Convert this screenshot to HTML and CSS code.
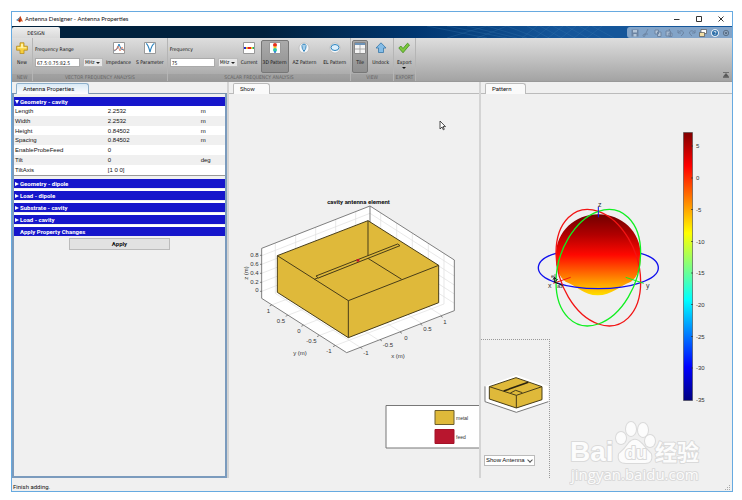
FILE: index.html
```html
<!DOCTYPE html>
<html lang="en">
<head>
<meta charset="utf-8">
<title>Antenna Designer - Antenna Properties</title>
<link rel="stylesheet" href="styles.css">
</head>
<body>
<div class="window">
  <header class="titlebar">
    <svg class="logo" viewBox="0 0 18 18"><path d="M0 10L5 7L8 10L4 13Z" fill="#4a8fb8"/><path d="M5 7Q8 5 11 0L8 10Z" fill="#2f5f8a"/><path d="M11 0Q14 5 18 15Q14 11 10 17Q7 12 4 13Q9 9 11 0Z" fill="#d9531e"/><path d="M11 0Q11 9 6 13Q9 12 10 17Q12 10 11 0Z" fill="#8c1d10"/></svg>
    <h1>Antenna Designer - Antenna Properties</h1>
    <div class="winbtns">
      <button aria-label="Minimize"><svg viewBox="0 0 6 6"><path d="M0 3.5H5.500" stroke="#333"/></svg></button>
      <button aria-label="Maximize"><svg viewBox="0 0 6 6"><path d="M.5.5h5v5h-5z" stroke="#333" fill="none"/></svg></button>
      <button aria-label="Close"><svg viewBox="0 0 6 6"><path d="M.5.5l5 5M5.500.5l-5 5" stroke="#333"/></svg></button>
    </div>
  </header>
  <nav class="banner">
    <button class="ribbon-tab">DESIGN</button>
    <svg class="lattice" viewBox="0 0 200 12" preserveAspectRatio="xMaxYMid slice"><path d="M0 0L60 12M20 0L80 12M40 0L90 12M60 0L100 12M80 0L110 12M100 0L122 12M113 0L135 12M126 0L148 12M139 0L161 12M152 0L174 12M165 0L187 12M60 0L20 12M80 0L50 12M110 0L95 12M123 0L108 12M136 0L121 12M149 0L134 12M162 0L147 12M175 0L160 12" stroke="#3a78ae" stroke-width=".5" opacity=".6"/></svg>
    <div class="quick">
      <button aria-label="Save"><svg viewBox="0 0 8 8"><path d="M.5.5h7v7h-7z" fill="#6c84a2"/><path d="M2 1h4v2.500H2zM2.500 5h3v2.500h-3z" fill="#b4c5d8"/></svg></button>
      <button aria-label="Cut"><svg viewBox="0 0 8 8"><path d="M6 0L3 6M2 5h4" stroke="#6c84a2" fill="none"/><circle cx="2" cy="6.500" r="1" fill="none" stroke="#6c84a2"/></svg></button>
      <button aria-label="Copy"><svg viewBox="0 0 8 8"><path d="M1 1h3.500v4H1zM3.500 3H7v4.500H3.500z" fill="#b4c5d8" stroke="#6c84a2"/></svg></button>
      <button aria-label="Paste"><svg viewBox="0 0 8 8"><path d="M1 2h4.500v5H1zM3 0h1.500v2M4 4h3v3.500H4z" fill="#a4b8cf" stroke="#6c84a2"/></svg></button>
      <button aria-label="Undo"><svg viewBox="0 0 8 8"><path d="M1 1v3h3M1 4Q4 0 6.500 3Q7 5 4 7" fill="none" stroke="#6c84a2"/></svg></button>
      <button aria-label="Redo"><svg viewBox="0 0 8 8"><path d="M7 1v3H4M7 4Q4 0 1.500 3Q1 5 4 7" fill="none" stroke="#6c84a2"/></svg></button>
      <button aria-label="Switch window"><svg viewBox="0 0 8 8"><path d="M2 .5h5.500v4H2z" fill="#fff" stroke="#555" stroke-width=".7"/><path d="M.5 3.500h5v4h-5z" fill="#f3dfa6" stroke="#555" stroke-width=".7"/></svg></button>
      <button aria-label="Help"><svg viewBox="0 0 8 8"><circle cx="4" cy="4" r="3.800" fill="#fff"/><circle cx="4" cy="4" r="3" fill="#2c6ea8"/><path d="M3 3.200Q3 2.200 4 2.200T5 3.200Q5 3.800 4 4.300M4 5.200v.8" fill="none" stroke="#fff" stroke-width=".8"/></svg></button>
      <button aria-label="More"><svg viewBox="0 0 8 8"><circle cx="4" cy="4" r="2.700" fill="#8fa6bf" stroke="#51647a" stroke-width=".8"/><path d="M2.600 3.500h2.800L4 5.200z" fill="#33475e"/></svg></button>
    </div>
  </nav>
  <section class="toolstrip">
    <div class="group">
      <div class="tools"><button class="tool roomy"><svg viewBox="0 0 12 12"><path d="M4 .8h4v3.400h3.400v4H8v3.400H4V8.200H.6v-4H4z" fill="#f7cf3c" stroke="#b68a1c" stroke-width=".8"/><path d="M5 1.800h2v3.400H10.500v1H1.500v-1H5z" fill="#fff3a8"/></svg>New</button></div>
      <div class="caption">NEW</div>
    </div>
    <div class="group">
      <div class="tools">
        <div class="field"><label for="range">Frequency Range</label><div class="pair"><input id="range" value="67.5:0.75:82.5"><span class="combo"><select aria-label="Range unit"><option>MHz</option></select></span></div></div>
        <button class="tool"><svg viewBox="0 0 12 12"><path d="M.5.5h11v11H.5z" fill="#fff" stroke="#999"/><path d="M1 9L4 7L6 2L8 7L11 8" fill="none" stroke="#2d83bd"/><path d="M1 8L3 8L5 4L7 9L9 5L11 9" fill="none" stroke="#e0785a" stroke-width=".8"/></svg>Impedance</button>
        <button class="tool"><svg viewBox="0 0 12 12"><path d="M.5.5h11v11H.5z" fill="#fff" stroke="#999"/><path d="M2 1.500Q4 2 6 10Q8 2 10.500 1.500" fill="none" stroke="#2d83bd" stroke-width="1.200"/></svg>S Parameter</button>
      </div>
      <div class="caption">VECTOR FREQUENCY ANALYSIS</div>
    </div>
    <div class="group">
      <div class="tools">
        <div class="field"><label for="freq">Frequency</label><div class="pair"><input id="freq" value="75"><span class="combo"><select aria-label="Frequency unit"><option>MHz</option></select></span></div></div>
        <button class="tool"><svg viewBox="0 0 12 12"><path d="M.5.5h11v11H.5z" fill="#fff" stroke="#999"/><path d="M1 6h2" stroke="#22c" stroke-width="2"/><path d="M3 6h1.500M8 6h1.500" stroke="#f2d21c" stroke-width="2"/><path d="M4.500 6H8" stroke="#e8201c" stroke-width="2"/><path d="M9.500 6H11" stroke="#2a6" stroke-width="2"/></svg>Current</button>
        <button class="tool pressed"><svg viewBox="0 0 12 12"><path d="M.5.5h11v11H.5z" fill="#fff" stroke="#999"/><circle cx="6" cy="3" r="2" fill="#e8301c"/><path d="M4.500 4.500h3v2h-3z" fill="#f5cf22"/><circle cx="6" cy="8" r="2" fill="#31c8a8"/><path d="M5 9.200h2v1.500H5z" fill="#2773d8"/></svg>3D Pattern</button>
        <button class="tool roomy"><svg viewBox="0 0 12 12"><circle cx="6" cy="6" r="5" fill="#f5f7f9" stroke="#b5b5b5" stroke-width=".7"/><path d="M6 9.500Q3.500 6 4 3.500Q4.500 2 6 2.200Q7.500 2 8 3.500Q8.500 6 6 9.500Z" fill="#dceefb" stroke="#2d83bd"/><path d="M6 3v4" stroke="#2d83bd" stroke-width=".6"/></svg>AZ Pattern</button>
        <button class="tool roomy"><svg viewBox="0 0 12 12"><circle cx="6" cy="6" r="5" fill="#f5f7f9" stroke="#b5b5b5" stroke-width=".7"/><ellipse cx="6" cy="5.500" rx="4" ry="3" fill="#dceefb" stroke="#2d83bd"/></svg>EL Pattern</button>
      </div>
      <div class="caption">SCALAR FREQUENCY ANALYSIS</div>
    </div>
    <div class="group">
      <div class="tools">
        <button class="tool pressed"><svg viewBox="0 0 12 12"><path d="M.5.5h11v11H.5z" fill="#f4f4f4" stroke="#888"/><path d="M1 1h10v2H1z" fill="#6d93b8"/><path d="M6 3v8M1 7h10" stroke="#999" stroke-width=".8"/></svg>Tile</button>
        <button class="tool roomy"><svg viewBox="0 0 12 12"><path d="M6 .8L11 6H8.500v4.500h-5V6H1z" fill="#84bce6" stroke="#3777a8" stroke-width=".8"/></svg>Undock</button>
      </div>
      <div class="caption">VIEW</div>
    </div>
    <div class="group">
      <div class="tools"><button class="tool"><svg viewBox="0 0 12 12"><path d="M.8 6L2.800 4L5 6.500L9.500 1.200L11.500 3L5 10.800Z" fill="#7cc93c" stroke="#3f8a1d" stroke-width=".8"/></svg>Export<i class="caret"></i></button></div>
      <div class="caption">EXPORT</div>
    </div>
    <button class="collapse" aria-label="Minimize toolstrip"><svg viewBox="0 0 6 6"><path d="M0 .5h6M3 1.500L5.500 4.500h-5zM0 5.500h6" fill="#555" stroke="#555" stroke-width=".7"/></svg></button>
  </section>
  <main class="panes">
    <section class="pane active">
      <div class="tabs"><button class="tab">Antenna Properties</button></div>
      <div class="content properties">
        <button class="bar"><i class="down"></i>Geometry - cavity</button>
        <table>
          <tr><td>Length</td><td>2.2532</td><td>m</td></tr>
          <tr><td>Width</td><td>2.2532</td><td>m</td></tr>
          <tr><td>Height</td><td>0.84502</td><td>m</td></tr>
          <tr><td>Spacing</td><td>0.84502</td><td>m</td></tr>
          <tr><td>EnableProbeFeed</td><td>0</td><td></td></tr>
          <tr><td>Tilt</td><td>0</td><td>deg</td></tr>
          <tr><td>TiltAxis</td><td>[1 0 0]</td><td></td></tr>
        </table>
        <button class="bar folded"><i class="right"></i>Geometry - dipole</button>
        <button class="bar folded"><i class="right"></i>Load - dipole</button>
        <button class="bar folded"><i class="right"></i>Substrate - cavity</button>
        <button class="bar folded"><i class="right"></i>Load - cavity</button>
        <h2 class="bar last">Apply Property Changes</h2>
        <button class="apply">Apply</button>
      </div>
    </section>
    <section class="pane">
      <div class="tabs"><button class="tab">Show</button></div>
      <div class="content">
        <svg class="figure" viewBox="229 94 250 384" preserveAspectRatio="xMidYMin meet">
          <g transform="translate(235 190) scale(.33333)" stroke-linejoin="round">
            <path d="M80 175L405 48L658 210V362L335 488L80 325Z" fill="#fff"/>
            <path d="M121 159V310L376 472M182 135V290L430 450M242 112V265L495 425M302 88V240L560 400M362 65V215L620 376M437 69V220L110 345M485 99V250L158 376M532 130V280L205 406M580 160V310L252 437M627 190V342L300 467M80 304L405 178L658 340M80 277L405 150L658 312M80 250L405 123L658 285M80 223L405 96L658 258M80 197L405 70L658 232" fill="none" stroke="#dedede" stroke-width="2"/>
            <path d="M80 175L405 48L658 210V362L335 488L80 325ZM405 48V150" fill="none" stroke="#666" stroke-width="2.500"/>
            <path d="M127 197L399 92L611 226V338L340 443L127 307Z" fill="#dfb93a" stroke="#473c18" stroke-width="3"/>
            <path d="M127 197L340 332L611 226M340 332V443M399 92V205L500 268M399 202L238 268" fill="none" stroke="#473c18" stroke-width="3"/>
            <path d="M243 258L488 162L495 167L250 264Z" fill="#dfb93a" stroke="#473c18" stroke-width="3"/>
            <path d="M365 207h8v8h-8z" fill="#c4122b"/>
            <path d="M80 196h-5M80 223h-5M80 250h-5M80 277h-5M80 304h-5M110 345l-6 3M158 376l-6 3M205 406l-6 3M252 437l-6 3M300 467l-6 3M376 472l6 4M435 449l6 4M495 426l6 4M556 402l6 4M617 378l6 4" stroke="#555" stroke-width="2"/>
          </g>
          <text class="title" x="358.500" y="204">cavity antenna element</text>
          <g class="tick end"><text x="258.500" y="257">0.8</text><text x="258.500" y="266">0.6</text><text x="258.500" y="275">0.4</text><text x="258.500" y="284">0.2</text><text x="258.500" y="292">0</text></g>
          <g class="tick mid">
            <text x="268.500" y="313">1</text><text x="281" y="323">0.5</text><text x="299" y="333">0</text><text x="311.500" y="343">-0.5</text><text x="329" y="353">-1</text>
            <text x="366" y="355">-1</text><text x="388" y="347">-0.5</text><text x="406" y="340">0</text><text x="427.500" y="331">0.5</text><text x="445" y="324">1</text>
            <text x="300" y="355">y (m)</text><text x="398" y="358">x (m)</text><text transform="translate(248 273) rotate(-90)">z (m)</text>
          </g>
          <path d="M481 405.500H386V448H481" fill="#fff" stroke="#777"/>
          <path d="M435 410.500h19v14h-19z" fill="#dfb93a" stroke="#6b5c2c"/>
          <path d="M435 429.500h19v14h-19z" fill="#b8162e" stroke="#a31228"/>
          <g class="legend"><text x="456" y="420">metal</text><text x="456" y="439">feed</text></g>
          <path d="M440 121v8l2-2 1.300 2.800 1-.5-1.300-2.700h2.500z" fill="#fff" stroke="#222" stroke-width=".8"/>
        </svg>
      </div>
    </section>
    <section class="pane">
      <div class="tabs"><button class="tab">Pattern</button></div>
      <div class="content">
        <svg class="figure" viewBox="481 94 251 384" preserveAspectRatio="xMidYMin meet">
          <defs>
            <linearGradient id="ball" x1="0" y1="0" x2="0" y2="1"><stop offset="0" stop-color="#700000"/><stop offset=".25" stop-color="#b00000"/><stop offset=".5" stop-color="#ff0800"/><stop offset=".75" stop-color="#ff7400"/><stop offset="1" stop-color="#ffe000"/></linearGradient>
            <linearGradient id="jet" x1="0" y1="0" x2="0" y2="1"><stop offset="0" stop-color="#800000"/><stop offset=".125" stop-color="#f00"/><stop offset=".375" stop-color="#ff0"/><stop offset=".625" stop-color="#0ff"/><stop offset=".875" stop-color="#00f"/><stop offset="1" stop-color="#000080"/></linearGradient>
          </defs>
          <g transform="translate(525 190) scale(.33333)" fill="none" stroke-width="4">
            <path d="M93 195C93 125 150 73 220 73S347 125 347 195C347 235 338 262 318 275C285 286 260 316 218 316S155 286 122 275C102 262 93 235 93 195Z" fill="url(#ball)"/>
            <path d="M93 190C58 200 40 215 40 234C40 268 120 296 220 296S400 268 400 234C400 215 382 200 347 190" stroke="#1010ee"/>
            <g transform="matrix(127 44 0 169 220 233)"><circle r="1" stroke="#f21414" stroke-width="1.300" vector-effect="non-scaling-stroke"/></g>
            <g transform="matrix(127 -44 0 169 220 233)"><circle r="1" stroke="#10ef20" stroke-width="1.300" vector-effect="non-scaling-stroke"/></g>
            <path d="M220 50V82" stroke="#1010ee" stroke-width="3"/>
            <path d="M85 280L137 262" stroke="#f21414" stroke-width="3"/><path d="M302 262L356 280" stroke="#10ef20" stroke-width="3"/>
            <path d="M88 262V276L112 286M84 269l5-7 5 7M88 276l10-8" stroke="#111" stroke-width="3"/>
          </g>
          <g class="axis"><text x="598" y="207">z</text><text x="548" y="288">x</text><text x="646" y="288">y</text><text class="small" x="551" y="278">el</text><text class="small" x="557" y="288">az</text></g>
          <path d="M683.500 132.500h9v268h-9z" fill="url(#jet)" stroke="#444" stroke-width=".6"/>
          <path d="M691 146h2M691 178h2M691 209.500h2M691 241.500h2M691 273h2M691 304.500h2M691 336.500h2M691 368h2" stroke="#333" stroke-width=".7"/>
          <g class="tick"><text x="696" y="148">5</text><text x="696" y="180">0</text><text x="696" y="212">-5</text><text x="696" y="244">-10</text><text x="696" y="275">-15</text><text x="696" y="307">-20</text><text x="696" y="339">-25</text><text x="696" y="370">-30</text><text x="696" y="402">-35</text></g>
        </svg>
        <aside class="preview">
          <svg viewBox="0 0 66 44"><g transform="scale(.33333)"><path d="M6 46L100 12L196 46V92L100 124L6 92Z" fill="#fff"/><path d="M6 46V92L100 124L196 92" fill="none" stroke="#777" stroke-width="3"/><path d="M19 47L99 20L177 47V86L100 111L19 84Z" fill="#dfb93a" stroke="#473c18" stroke-width="3"/><path d="M19 47L100 73L177 47M100 73V111M82 66L98 58L118 65" fill="none" stroke="#473c18" stroke-width="3"/><path d="M62 60L136 34" stroke="#2c2410" stroke-width="5"/></g></svg>
          <span class="combo wide"><select aria-label="Preview"><option>Show Antenna</option></select></span>
        </aside>
      </div>
    </section>
  </main>
  <footer class="status">Finish adding.<svg viewBox="0 0 6 6"><path d="M4 0h1v1H4zM2 2h1v1H2zM4 2h1v1H4zM0 4h1v1H0zM2 4h1v1H2zM4 4h1v1H4z" fill="#aaa"/></svg></footer>
  <svg class="watermark" viewBox="0 0 140 68">
    <g fill="#fcfcfc" stroke="#dadada" stroke-width="2" paint-order="stroke" stroke-linejoin="round">
      <text class="brand" x="1" y="41">Bai</text>
      <ellipse cx="52" cy="18" rx="5" ry="6"/><ellipse cx="62" cy="9" rx="5" ry="7"/><ellipse cx="74" cy="10" rx="5" ry="7"/><ellipse cx="81" cy="21" rx="5" ry="6"/>
      <path d="M50 34Q56 29 60 23Q66 16 73 24Q78 30 82 34Q84 43 76 43H57Q48 43 50 34Z"/>
      <text class="paw" x="56" y="39">du</text>
      <text class="cjk" x="86" y="40">经验</text>
      <text class="site" x="2" y="60">jingyan.baidu.com</text>
    </g>
  </svg>
</div>
</body>
</html>
```
FILE: styles.css
```css
* { box-sizing: border-box; }
body {
  margin: 0;
  padding: 11px 9px 8px 11px;
  min-height: 100vh;
  display: flex;
  background: #fff;
  color: #111;
  font: 5px/8px "DejaVu Sans Condensed", "Liberation Sans", sans-serif;
}
button, input, select { font: inherit; color: inherit; margin: 0; padding: 0; border: 0; background: none; }
svg { display: block; flex: none; }
.window { position: relative; flex: 1; display: flex; flex-direction: column; border: 1px solid #67aae0; background: #f0f0f0; }

.titlebar { display: flex; align-items: center; height: 14px; padding: 0 8px 0 4px; background: #fff; }
.logo { width: 7px; height: 7px; }
h1 { margin: 0 0 0 2px; font: 6px/8px "Lato", sans-serif; }
.winbtns { margin-left: auto; display: flex; gap: 16px; }
.winbtns svg { width: 6px; height: 6px; }

.banner { display: flex; align-items: flex-end; height: 12px; background: linear-gradient(90deg, #00213d 35%, #003670 56%, #15569a 76%); }
.ribbon-tab { width: 48px; height: 11px; border-radius: 2px 2px 0 0; background: linear-gradient(#eee, #d9d9d9); }
.lattice { width: 200px; height: 12px; margin-left: auto; }
.quick { display: flex; align-items: center; justify-content: space-between; width: 105px; height: 11px; padding: 0 2px 0 4px; border-radius: 3px 0 0 3px; background: #83a4c8; }
.quick svg { width: 8px; height: 8px; }

.toolstrip { position: relative; display: flex; height: 44px; background: linear-gradient(#dedede, #a3a3a3); border-bottom: 1px solid #999; }
.group { display: flex; flex-direction: column; border-right: 1px solid #b5b5b5; }
.tools { flex: 1; display: flex; gap: 1px; padding: 2px 1px 1px; }
.caption { height: 7px; line-height: 7px; text-align: center; color: #666; background: rgba(0, 0, 0, .06); }
.tool { display: flex; flex-direction: column; align-items: center; gap: 4px; padding: 1px 1px 0; border: 1px solid transparent; border-radius: 2px; white-space: nowrap; }
.roomy { padding: 1px 2px 0; }
.tool svg { width: 12px; height: 12px; }
.pressed { border-color: #777; background: linear-gradient(#aaa, #909090); }
.caret { border: 2px solid transparent; border-top-color: #111; border-bottom: 0; margin-top: -3px; }
.field { display: flex; flex-direction: column; padding: 5px 0 0 1px; }
.pair { display: flex; gap: 3px; margin-top: 5px; }
.pair input { width: 45px; height: 9px; padding: 0 1px; background: #fff; border: 1px solid #aaa; }
.combo { position: relative; display: flex; width: 20px; height: 9px; border: 1px solid #bbb; background: #e8e8e8; }
.combo select { appearance: none; flex: 1; padding-left: 1px; line-height: 7px; }
.combo::after { content: ""; position: absolute; right: 2px; top: 3px; border: 2px solid transparent; border-top-color: #222; border-bottom: 0; pointer-events: none; }
.collapse { position: absolute; right: 3px; bottom: 3px; }
.collapse svg { width: 6px; height: 6px; }

.panes { flex: 1; display: grid; grid-template-columns: 217fr 252fr 251fr; }
.pane { display: flex; flex-direction: column; border-right: 2px solid #d4d4d4; }
.pane:last-child { border-right: 0; }
.tabs { display: flex; height: 12px; padding: 1px 4px 0; border-bottom: 1px solid #bbb; }
.tab { height: 11px; padding: 0 14px 0 6px; border: 1px solid #bbb; border-bottom: 0; border-radius: 2px 3px 0 0; background: #fafafa; font: 6px/8px "Roboto", sans-serif; }
.active .tab { background: linear-gradient(#d9e9f5, #fff); border-color: #8fb0cb; }
.active .tabs { border-color: #7c93ad; }
.content { position: relative; flex: 1; display: flex; flex-direction: column; }
.figure { width: 100%; height: auto; }

.properties { border: 2px solid #7b9bbd; border-top: 0; padding: 3px 0 0; background: #f0f0f0; }
.bar { display: flex; align-items: center; height: 9px; margin: 0; padding-left: 1px; gap: 1px; background: #1616cb; color: #fff; font: bold 6px/8px "Roboto", sans-serif; text-align: left; }
.folded { height: 12px; border-bottom: 2px solid #fff; margin: 0; box-shadow: inset 0 -1px #f0f0f0; }
.last { padding-left: 6px; }
.down { border: 2px solid transparent; border-top: 4px solid #fff; border-bottom: 0; }
.right { border: 2px solid transparent; border-left: 4px solid #fff; border-right: 0; }
table { height: 70px; margin-bottom: 3px; border-collapse: collapse; background: #fff; border-bottom: 1px solid #999; font: 6px/8px "Liberation Sans", sans-serif; }
tr:nth-child(even) { background: #f0f0f0; }
td { padding: 0 1px; }
td:first-child { width: 44%; }
td:nth-child(2) { width: 44%; }
.apply { align-self: center; width: 48%; height: 12px; margin-top: 2px; border: 1px solid #bbb; background: #e2e2e2; font: bold 6px/8px "Roboto", sans-serif; }

.figure text { fill: #333; font: 6px "Liberation Sans", sans-serif; }
.figure .title { font: bold 6px "Roboto", sans-serif; fill: #111; text-anchor: middle; }
.figure .end text { text-anchor: end; }
.figure .mid text { text-anchor: middle; }
.figure .legend text { font-size: 5px; }
.figure .axis text { font-size: 7px; }
.figure .axis .small { font-size: 6px; }

.preview { position: absolute; left: 0; bottom: 0; width: 69px; height: 139px; padding: 31px 2px 12px; display: flex; flex-direction: column; justify-content: space-between; border: 1px dotted #999; border-left: 0; border-bottom: 0; }
.preview svg { width: 66px; height: 44px; }
.wide { width: 51px; height: 11px; margin-left: 1px; background: #fff; font: 6px/8px "Liberation Sans", sans-serif; }
.wide select { line-height: 9px; }
.wide::after { width: 3px; height: 3px; top: 2px; border: solid #555; border-width: 0 1px 1px 0; transform: rotate(45deg); }

.status { display: flex; align-items: flex-end; justify-content: space-between; height: 13px; padding: 0 1px; font: 6px/9px "Roboto", sans-serif; }
.status svg { width: 6px; height: 6px; }
.watermark { position: absolute; right: 23px; bottom: 3px; width: 140px; height: 68px; pointer-events: none; }
.brand { font: bold 28px "Liberation Sans", sans-serif; }
.paw { font: bold 18px "Liberation Sans", sans-serif; }
.cjk { font: bold 22px "Noto Sans CJK SC", sans-serif; }
.site { font: 15px "Open Sans", sans-serif; }
```
